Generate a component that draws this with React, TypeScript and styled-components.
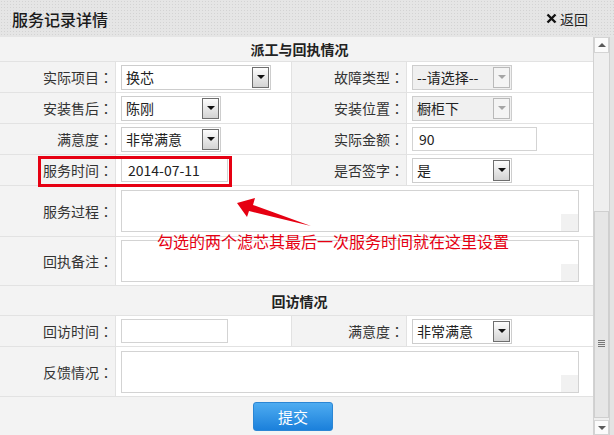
import React from 'react'
import styled, { createGlobalStyle, css } from 'styled-components'

const GlobalStyle = createGlobalStyle`
  html, body {
    margin: 0;
    padding: 0;
    background: #fff;
  }
  body {
    font-family: "Noto Sans CJK SC", "Microsoft YaHei", sans-serif;
    font-size: 14px;
    color: #333;
  }
  * {
    box-sizing: border-box;
  }
`

const Window = styled.div`
  width: 614px;
  height: 435px;
  overflow: hidden;
  display: flex;
  flex-direction: column;
`

const TitleBar = styled.header`
  height: 37px;
  flex: none;
  display: flex;
  align-items: center;
  justify-content: space-between;
  padding: 0 26px 0 12px;
  background-color: #e5e5e5;
  background-image: radial-gradient(#d3d3d3 0.7px, transparent 0.9px);
  background-size: 3px 3px;
`

const Title = styled.h1`
  margin: 0;
  font-size: 16px;
  font-weight: 500;
  color: #1a1a1a;
`

const BackLink = styled.a`
  display: flex;
  align-items: center;
  gap: 3px;
  font-size: 14px;
  color: #222;
  text-decoration: none;
`

const Body = styled.div`
  flex: 1;
  display: flex;
  min-height: 0;
`

const Sheet = styled.div`
  width: 593px;
  flex: none;
  display: flex;
  flex-direction: column;
  position: relative;
`

const SectionHead = styled.div<{ $h: number }>`
  height: ${p => p.$h}px;
  flex: none;
  display: flex;
  align-items: center;
  justify-content: center;
  padding-left: 6px;
  background: #f3f3f3;
  border-bottom: 1px solid #e2e2e2;
  font-weight: 700;
  font-size: 14px;
  color: #222;
`

const Row = styled.div<{ $h: number }>`
  height: ${p => p.$h}px;
  flex: none;
  display: grid;
  grid-template-columns: 116px 176px 115px 1fr;
  border-bottom: 1px solid #e2e2e2;
`

const Label = styled.div`
  background: #f3f3f3;
  border-right: 1px solid #e2e2e2;
  display: flex;
  align-items: center;
  justify-content: flex-end;
  padding-right: 2px;
  color: #333;
`

// full-width colon drawn centred in its box, as in the original
const Colon = styled.span`
  width: 14px;
  text-align: center;
  font-family: "Noto Sans CJK JP", sans-serif;
`

const Value = styled.div<{ $span?: boolean }>`
  background: #fff;
  display: flex;
  align-items: center;
  padding-left: 5px;
  color: #222;
  border-right: 1px solid #e2e2e2;
  &:last-child {
    border-right: none;
  }
  ${p =>
    p.$span &&
    css`
      grid-column: span 3;
    `}
`

const SelectBox = styled.div<{ $w: number; $disabled?: boolean }>`
  width: ${p => p.$w}px;
  height: 25px;
  padding: 1px;
  display: flex;
  align-items: stretch;
  border: 1px solid #cdcdcd;
  background: ${p => (p.$disabled ? '#f0f0f0' : '#fff')};
`

const SelectText = styled.span`
  flex: 1;
  display: flex;
  align-items: center;
  padding-left: 3px;
  color: #222;
`

const SelectArrow = styled.span<{ $disabled?: boolean }>`
  width: 17px;
  display: flex;
  align-items: center;
  justify-content: center;
  border: 1px solid ${p => (p.$disabled ? '#b9b9b9' : '#6e6e6e')};
  background: ${p => (p.$disabled ? '#f4f4f4' : 'linear-gradient(#fdfdfd, #d3d3d3)')};
  &::after {
    content: '';
    border-left: 4px solid transparent;
    border-right: 4px solid transparent;
    border-top: 4px solid ${p => (p.$disabled ? '#a5a5a5' : '#111')};
  }
`

const TextInput = styled.div<{ $w: number }>`
  width: ${p => p.$w}px;
  height: 24px;
  display: flex;
  align-items: center;
  padding-left: 6px;
  border: 1px solid #d3d3d3;
  background: #fff;
  color: #222;
`

const AreaBox = styled.div`
  width: 458px;
  height: 42px;
  display: flex;
  align-items: flex-end;
  justify-content: flex-end;
  border: 1px solid #d3d3d3;
  background: #fff;
`

const AreaCorner = styled.span`
  width: 17px;
  height: 17px;
  background: #f1f1f1;
`

const Footer = styled.div`
  flex: 1;
  display: flex;
  justify-content: center;
  align-items: flex-start;
  padding: 5px 7px 0 0;
  background: #f3f3f3;
`

const SubmitButton = styled.button`
  width: 80px;
  height: 29px;
  border: 1px solid #2b86d4;
  border-radius: 3px;
  background: linear-gradient(#4eacf1, #1b80db);
  color: #fff;
  font-family: inherit;
  font-size: 15px;
  cursor: pointer;
`

const Highlight = styled.div`
  position: absolute;
  left: 38px;
  top: 119px;
  width: 194px;
  height: 31px;
  border: 3px solid #e60012;
`

const Note = styled.div`
  position: absolute;
  left: 157px;
  top: 194px;
  font-size: 16px;
  line-height: 20px;
  color: #e60012;
  white-space: nowrap;
`

const NoteArrow = styled.svg`
  position: absolute;
  left: 230px;
  top: 155px;
`

const ScrollBar = styled.div`
  width: 21px;
  flex: none;
  display: flex;
  border-left: 1px solid #d2d2d2;
`

const ScrollLane = styled.div`
  width: 15px;
  display: flex;
  flex-direction: column;
`

const ScrollEdge = styled.div`
  flex: 1;
  background: #e3e3e3;
  border-left: 1px solid #d0d0d0;
`

const ScrollButton = styled.div<{ $down?: boolean }>`
  height: ${p => (p.$down ? 15 : 16)}px;
  display: flex;
  align-items: center;
  justify-content: center;
  background: #fbfbfb;
  border: 1px solid #d4d4d4;
  &::after {
    content: '';
    border-left: 4px solid transparent;
    border-right: 4px solid transparent;
    ${p =>
      p.$down
        ? css`
            border-top: 4px solid #5a5a5a;
          `
        : css`
            border-bottom: 4px solid #5a5a5a;
          `}
  }
`

const ScrollTrack = styled.div`
  flex: 1;
  display: flex;
  flex-direction: column;
  padding-top: 158px;
  background: #efefef;
`

const ScrollThumb = styled.div`
  height: 207px;
  display: flex;
  flex-direction: column;
  align-items: center;
  gap: 1px;
  padding-top: 128px;
  background: #e6e6e6;
  border: 1px solid #cfcfcf;
`

const Grip = styled.span`
  width: 7px;
  height: 1px;
  background: #777;
`

function FieldLabel({ text }: { text: string }) {
  return (
    <Label>
      {text}
      <Colon>：</Colon>
    </Label>
  )
}

function Select({ w, text, disabled }: { w: number; text: string; disabled?: boolean }) {
  return (
    <SelectBox $w={w} $disabled={disabled}>
      <SelectText>{text}</SelectText>
      <SelectArrow $disabled={disabled} />
    </SelectBox>
  )
}

function TextArea() {
  return (
    <AreaBox>
      <AreaCorner />
    </AreaBox>
  )
}

export default function App() {
  return (
    <Window>
      <GlobalStyle />
      <TitleBar>
        <Title>服务记录详情</Title>
        <BackLink href="#">
          <svg width="11" height="11" viewBox="0 0 11 11">
            <path d="M1.5 1.5 L9.5 9.5 M9.5 1.5 L1.5 9.5" stroke="#111" strokeWidth="2.4" />
          </svg>
          返回
        </BackLink>
      </TitleBar>

      <Body>
        <Sheet>
          <SectionHead $h={25}>派工与回执情况</SectionHead>

          <Row $h={31}>
            <FieldLabel text="实际项目" />
            <Value><Select w={150} text="换芯" /></Value>
            <FieldLabel text="故障类型" />
            <Value><Select w={100} text="--请选择--" disabled /></Value>
          </Row>
          <Row $h={31}>
            <FieldLabel text="安装售后" />
            <Value><Select w={100} text="陈刚" /></Value>
            <FieldLabel text="安装位置" />
            <Value><Select w={100} text="橱柜下" disabled /></Value>
          </Row>
          <Row $h={31}>
            <FieldLabel text="满意度" />
            <Value><Select w={100} text="非常满意" /></Value>
            <FieldLabel text="实际金额" />
            <Value><TextInput $w={125}>90</TextInput></Value>
          </Row>
          <Row $h={31}>
            <FieldLabel text="服务时间" />
            <Value><TextInput $w={107}>2014-07-11</TextInput></Value>
            <FieldLabel text="是否签字" />
            <Value><Select w={100} text="是" /></Value>
          </Row>
          <Row $h={51}>
            <FieldLabel text="服务过程" />
            <Value $span><TextArea /></Value>
          </Row>
          <Row $h={49}>
            <FieldLabel text="回执备注" />
            <Value $span><TextArea /></Value>
          </Row>

          <SectionHead $h={30}>回访情况</SectionHead>

          <Row $h={31}>
            <FieldLabel text="回访时间" />
            <Value><TextInput $w={107} /></Value>
            <FieldLabel text="满意度" />
            <Value><Select w={100} text="非常满意" /></Value>
          </Row>
          <Row $h={50}>
            <FieldLabel text="反馈情况" />
            <Value $span><TextArea /></Value>
          </Row>

          <Footer>
            <SubmitButton>提交</SubmitButton>
          </Footer>

          <Highlight />
          <NoteArrow width="90" height="45" viewBox="0 0 90 45">
            <polygon points="7,11 25,6 23,13 81,34 19,19 17,25" fill="#e60012" />
          </NoteArrow>
          <Note>勾选的两个滤芯其最后一次服务时间就在这里设置</Note>
        </Sheet>

        <ScrollBar>
          <ScrollLane>
            <ScrollButton />
            <ScrollTrack>
              <ScrollThumb>
                <Grip />
                <Grip />
                <Grip />
                <Grip />
              </ScrollThumb>
            </ScrollTrack>
            <ScrollButton $down />
          </ScrollLane>
          <ScrollEdge />
        </ScrollBar>
      </Body>
    </Window>
  )
}
